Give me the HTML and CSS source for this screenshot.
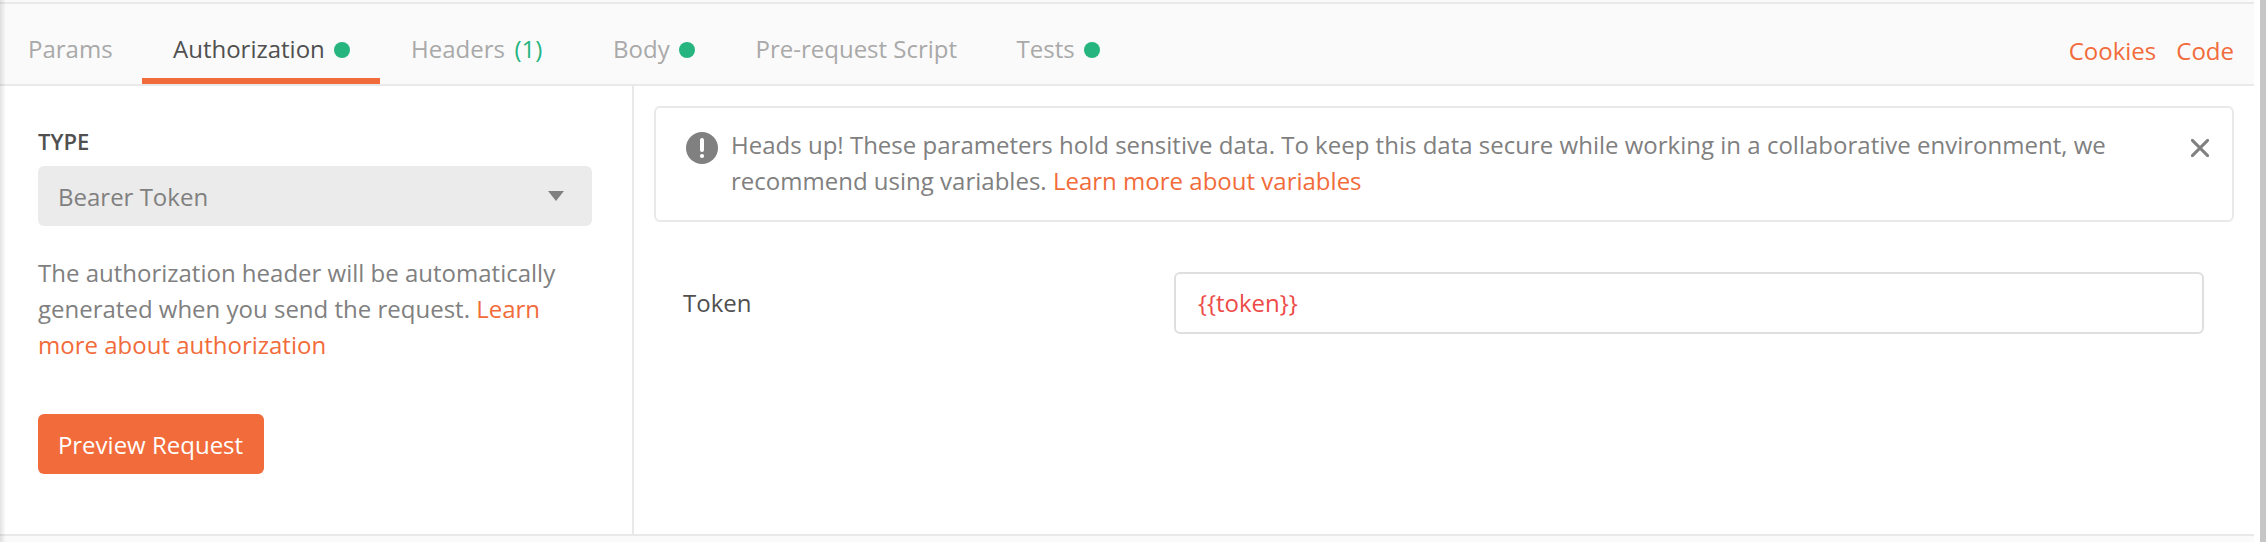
FILE: index.html
```html
<!DOCTYPE html>
<html lang="en">
<head>
<meta charset="utf-8">
<title>Authorization</title>
<link rel="stylesheet" href="styles.css">
</head>
<body>
<div class="window">
  <div class="builder">
    <header class="bar">
      <nav class="tabs">
        <a class="tab tab-params">Params</a>
        <a class="tab tab-auth active"><span class="label">Authorization</span><i class="dot"></i></a>
        <a class="tab tab-headers"><span class="label">Headers</span><span class="count">(1)</span></a>
        <a class="tab tab-body"><span class="label">Body</span><i class="dot"></i></a>
        <a class="tab tab-pre"><span class="label">Pre-request Script</span></a>
        <a class="tab tab-tests"><span class="label">Tests</span><i class="dot"></i></a>
      </nav>
      <div class="actions"><a class="link">Cookies</a><a class="link">Code</a></div>
    </header>
    <main class="content">
      <aside class="side">
        <div class="side-title">TYPE</div>
        <div class="select"><span>Bearer Token</span>
          <svg class="caret" width="16" height="10" viewBox="0 0 16 10"><path d="M0 0H16L8 10Z" fill="#808080"/></svg>
        </div>
        <p class="help">The authorization header will be automatically<br>generated when you send the request. <a class="link">Learn<br>more about authorization</a></p>
        <button class="button">Preview Request</button>
      </aside>
      <section class="detail">
        <div class="notice">
          <svg class="alert" width="32" height="32" viewBox="0 0 32 32"><circle cx="16" cy="16" r="16" fill="#808080"/><path d="M16 8V18" stroke="#fff" stroke-width="4" stroke-linecap="round"/><circle cx="16" cy="24" r="2.1" fill="#fff"/></svg>
          <p class="notice-text">Heads up! These parameters hold sensitive data. To keep this data secure while working in a collaborative environment, we<br>recommend using variables. <a class="link">Learn more about variables</a></p>
          <svg class="close" width="18" height="18" viewBox="0 0 18 18"><path d="M1.4 1.4L16.6 16.6M16.6 1.4L1.4 16.6" stroke="#808080" stroke-width="3" stroke-linecap="round"/></svg>
        </div>
        <div class="field">
          <label class="field-label">Token</label>
          <div class="input">{{token}}</div>
        </div>
      </section>
    </main>
    <footer class="foot"></footer>
  </div>
  <div class="scrollbar"></div>
  <div class="edge"></div>
</div>
</body>
</html>
```
FILE: styles.css
```css
* { box-sizing: border-box; }
body {
  margin: 0;
  font: 24px/36px "Open Sans", "Noto Sans", sans-serif;
  color: #808080;
  background: #fff;
}
p { margin: 0; }
.window {
  position: relative;
  display: flex;
  justify-content: space-between;
  width: 2266px;
  height: 542px;
  overflow: hidden;
}
.builder {
  display: flex;
  flex-direction: column;
  width: 2254px;
  padding-top: 2px;
  background: #fafafa;
}
.scrollbar { width: 6px; background: #c6c6c6; }
.edge {
  position: absolute;
  inset: 0 auto 0 0;
  width: 6px;
  background: linear-gradient(to right, rgba(0,0,0,.11), rgba(0,0,0,0));
}
.bar {
  display: flex;
  justify-content: space-between;
  height: 84px;
  border-top: 2px solid #e9e9e9;
  border-bottom: 2px solid #e9e9e9;
}
.tabs { display: flex; }
.tab {
  display: flex;
  align-items: flex-start;
  height: 80px;
  padding: 27px 0 0 30px;
  color: #a9a9a9;
  white-space: nowrap;
}
.tab-params { width: 142px; padding-left: 28px; }
.tab-auth { width: 238px; padding-left: 31px; }
.tab-headers { width: 202px; padding-left: 31px; }
.tab-body { width: 144px; padding-left: 31px; }
.tab-pre { width: 261px; padding-left: 29.5px; }
.tab-tests { width: 143px; padding-left: 29.5px; }
.active { color: #505050; border-bottom: 6px solid #f26b3a; }
.dot {
  width: 16px;
  height: 16px;
  margin: 11px 0 0 9.5px;
  border-radius: 50%;
  background: #26b47f;
}
.count { margin-left: 9.5px; color: #26b47f; }
.link { color: #f26b3a; }
.actions { display: flex; gap: 20px; padding: 29px 20px 0 0; }
.content { display: flex; height: 448px; background: #fff; }
.side {
  width: 634px;
  padding: 37px 40px 0 38px;
  border-right: 2px solid #e9e9e9;
}
.side-title { font-size: 22px; font-weight: 600; color: #505050; }
.select {
  display: flex;
  justify-content: space-between;
  align-items: center;
  height: 60px;
  margin-top: 7px;
  padding: 0 28px 0 20px;
  border-radius: 6px;
  background: #ebebeb;
}
.select span { padding-top: 2px; }
.help { margin-top: 29px; white-space: nowrap; }
.button {
  display: block;
  width: 226px;
  height: 60px;
  margin-top: 51px;
  padding: 2px 1px 0 0;
  border: 0;
  border-radius: 6px;
  font: inherit;
  color: #fff;
  background: #f26b3a;
}
.detail { flex: 1; padding: 20px 20px 0; }
.notice {
  display: flex;
  align-items: flex-start;
  height: 116px;
  padding: 19px 23px 0 30px;
  border: 2px solid #e9e9e9;
  border-radius: 6px;
}
.alert { margin-top: 5px; }
.notice-text { flex: 1; margin-left: 13px; white-space: nowrap; letter-spacing: 0.008px; }
.close { margin-top: 12px; }
.field {
  display: flex;
  justify-content: space-between;
  align-items: center;
  margin-top: 50px;
  padding: 0 30px 0 29px;
}
.field-label { color: #505050; }
.input {
  width: 1030px;
  height: 62px;
  padding: 11px 22px;
  border: 2px solid #dfdfdf;
  border-radius: 6px;
  color: #ed4b48;
}
.foot { height: 8px; border-top: 2px solid #e9e9e9; }
```
